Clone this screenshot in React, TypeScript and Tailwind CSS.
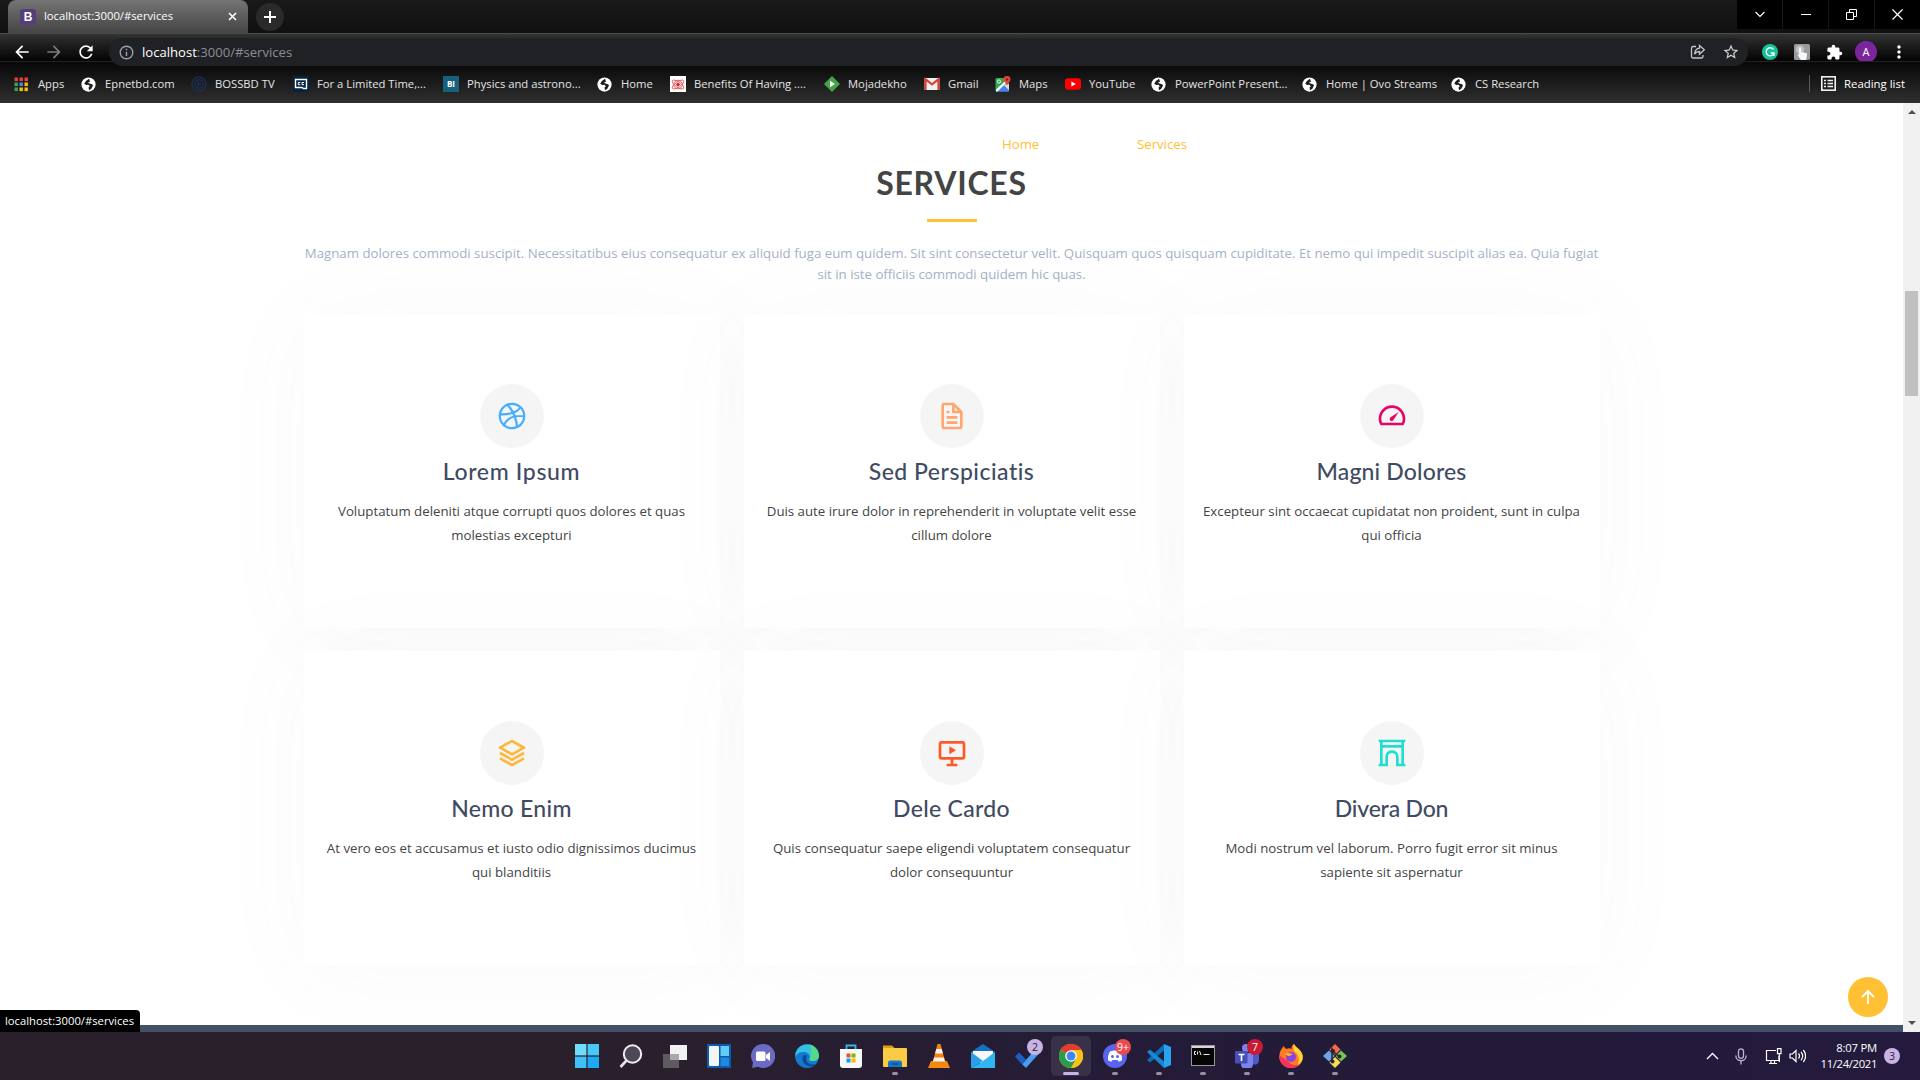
import type { ReactNode } from "react";
import {
  BiArch,
  BiFile,
  BiLayer,
  BiLogoDribbble,
  BiSlideshow,
  BiTachometer,
} from "react-icons/bi";
import { MdArrowBack, MdArrowForward, MdExtension, MdMoreVert, MdRefresh, MdStarOutline } from "react-icons/md";

const Globe = () => (
  <svg width="15" height="15" viewBox="0 0 16 16">
    <circle cx="8" cy="8" r="7.6" fill="#fff" />
    <path d="M8.6 1.8 5.2 4.2 3.4 7.2 5.6 8.6 8 8.2 9.4 9.8 8 11.2 8.6 14 11 12.4 12.8 9 11.8 7.6 9 7 7.4 5.8 9.6 5Z" fill="#1e1e1e" />
  </svg>
);

const appColors = ["#ea4335", "#ea4335", "#ea4335", "#34a853", "#4285f4", "#fbbc05", "#34a853", "#fbbc05", "#fbbc05"];
const Apps = () => (
  <svg width="15" height="15" viewBox="0 0 15 15">
    {appColors.map((c, i) => (
      <rect key={i} x={0.5 + (i % 3) * 5} y={0.5 + Math.floor(i / 3) * 5} width="3.4" height="3.6" fill={c} />
    ))}
  </svg>
);
const BossTv = () => (
  <svg width="16" height="16" viewBox="0 0 16 16" fill="none" stroke="#1b2d54">
    <circle cx="8" cy="8" r="7" strokeWidth="1.6" />
    <circle cx="8" cy="8" r="4.3" strokeWidth="1.4" />
    <path d="M6.8 5.8 10 8l-3.2 2.2Z" fill="#1b2d54" />
  </svg>
);
const Limited = () => (
  <svg width="16" height="16" viewBox="0 0 16 16">
    <rect width="16" height="16" fill="#052440" />
    <path d="M2.5 3.5h11v9h-3l-1.500-1H2.500Z" fill="none" stroke="#fff" strokeWidth="1.400" />
    <path d="M7.300 6.500h-2v2.200h2M11 6.500H9v2.200h2" fill="none" stroke="#fff" strokeWidth="1" />
  </svg>
);
const Physics = () => (
  <span className="flex h-4 w-4 items-center justify-center bg-[#17607c] text-[8px] leading-none font-bold text-white">BI</span>
);
const Benefits = () => (
  <svg width="16" height="16" viewBox="0 0 16 16">
    <rect width="16" height="16" fill="#fff" />
    <g fill="none" stroke="#e0454a" strokeWidth="0.800">
      <ellipse cx="8" cy="8.500" rx="6.800" ry="2.600" transform="rotate(35 8 8.500)" />
      <ellipse cx="8" cy="8.500" rx="6.800" ry="2.600" transform="rotate(-35 8 8.500)" />
      <circle cx="8" cy="8.500" r="4.300" />
    </g>
    <circle cx="8" cy="8.500" r="1.800" fill="#d4262c" />
  </svg>
);
const Moja = () => (
  <svg width="16" height="16" viewBox="0 0 16 16">
    <path d="M8 0l8 8-8 8-8-8Z" fill="#43a547" />
    <path d="M6 4.800 11 8l-5 3.200Z" fill="#fff" />
  </svg>
);
const Gmail = () => (
  <svg width="16" height="16" viewBox="0 0 16 16">
    <rect x="0.500" y="2" width="15" height="12" rx="1" fill="#f1f1f1" />
    <path d="M1.500 14V3.200L8 8.400l6.500-5.200V14" fill="none" stroke="#d93f35" strokeWidth="2.200" />
  </svg>
);
const Maps = () => (
  <svg width="16" height="16" viewBox="0 0 16 16">
    <rect x="0.500" y="2" width="13.500" height="13.500" rx="1" fill="#34a853" />
    <path d="M8 9l6 5.500V8Z" fill="#ddd" />
    <path d="M1 15.500 8 8.300l6 6v1.200Z" fill="#4a80f5" />
    <path d="M1 13.500 13.500 2v2.800L2.500 15.500H1Z" fill="#fff" />
    <path d="M12 0a3.500 3.500 0 0 1 3.500 3.600c0 2.300-2.500 3-3.500 6-1-3-3.500-3.700-3.500-6A3.500 3.500 0 0 1 12 0Z" fill="#e84335" />
    <circle cx="12" cy="3.500" r="1.200" fill="#8e1c15" />
    <circle cx="4" cy="5.500" r="1.600" fill="none" stroke="#fff" strokeWidth="0.900" />
  </svg>
);
const YouTube = () => (
  <svg width="16" height="16" viewBox="0 0 16 16">
    <rect y="2.300" width="16" height="11.400" rx="3" fill="#f00" />
    <path d="M6.400 5.500 10.800 8l-4.400 2.500Z" fill="#fff" />
  </svg>
);

const bookmarks: { label: string; width: string; icon: ReactNode }[] = [
  { label: "Apps", width: "w-[67px]", icon: <Apps /> },
  { label: "Epnetbd.com", width: "w-[110px]", icon: <Globe /> },
  { label: "BOSSBD TV", width: "w-[102px]", icon: <BossTv /> },
  { label: "For a Limited Time,...", width: "w-[150px]", icon: <Limited /> },
  { label: "Physics and astrono...", width: "w-[154px]", icon: <Physics /> },
  { label: "Home", width: "w-[73px]", icon: <Globe /> },
  { label: "Benefits Of Having ....", width: "w-[154px]", icon: <Benefits /> },
  { label: "Mojadekho", width: "w-[100px]", icon: <Moja /> },
  { label: "Gmail", width: "w-[71px]", icon: <Gmail /> },
  { label: "Maps", width: "w-[70px]", icon: <Maps /> },
  { label: "YouTube", width: "w-[86px]", icon: <YouTube /> },
  { label: "PowerPoint Present...", width: "w-[151px]", icon: <Globe /> },
  { label: "Home | Ovo Streams", width: "w-[149px]", icon: <Globe /> },
  { label: "CS Research", width: "w-[120px]", icon: <Globe /> },
];

function TabStrip() {
  return (
    <div className="flex h-[33px] bg-linear-to-b from-[#191919] to-[#111111]">
      <div className="ml-2 flex h-[33px] w-[240px] items-center rounded-t-lg bg-linear-to-b from-[#757575] to-[#454545] pl-3 text-[11.250px] text-white">
        <span className="flex h-4 w-4 items-center justify-center rounded-[3px] bg-[#563d7c] font-['Liberation_Sans'] text-[12px] leading-none font-bold text-white">B</span>
        <span className="ml-2 w-[184px] whitespace-nowrap">localhost:3000/#services</span>
        <svg width="9" height="9" viewBox="0 0 9 9" stroke="#fff" strokeWidth="1.600">
          <path d="M1 1l7 7M8 1 1 8" />
        </svg>
      </div>
      <div className="mt-[3px] ml-2 flex h-7 w-7 items-center justify-center rounded-full bg-[#2a2a2a]">
        <svg width="12" height="12" viewBox="0 0 12 12" stroke="#fff" strokeWidth="2">
          <path d="M6 0v12M0 6h12" />
        </svg>
      </div>
      <div className="ml-auto flex h-[29px] gap-px bg-[#181818] text-white">
        <span className="flex w-[45px] items-center justify-center bg-black">
          <svg width="10" height="7" viewBox="0 0 10 7" fill="none" stroke="#fff" strokeWidth="1.200"><path d="M0.500 1 5 5.500 9.500 1" /></svg>
        </span>
        <span className="flex w-[45px] items-center justify-center bg-black">
          <svg width="10" height="1" viewBox="0 0 10 1"><rect width="10" height="1" fill="#fff" /></svg>
        </span>
        <span className="flex w-[45px] items-center justify-center bg-black">
          <svg width="11" height="11" viewBox="0 0 11 11" fill="none" stroke="#fff"><path d="M0.500 3.500h7v7h-7zM3.500 3.500v-3h7v7H8" /></svg>
        </span>
        <span className="flex w-[45px] items-center justify-center bg-black">
          <svg width="11" height="11" viewBox="0 0 11 11" stroke="#fff" strokeWidth="1.200"><path d="M0.500 0.500l10 10M10.500 0.500l-10 10" /></svg>
        </span>
      </div>
    </div>
  );
}

function Toolbar() {
  return (
    <div className="flex h-[28px] border-t border-[#4a4a4a] bg-linear-to-b from-[#333333] to-[#050505] text-white">
      <div className="mt-[8px] ml-[12px] flex h-5 w-[97px] shrink-0 items-center gap-[12px]">
        <MdArrowBack size={20} />
        <MdArrowForward size={20} className="text-[#7b7b7b]" />
        <MdRefresh size={20} />
      </div>
      <div className="z-10 mt-1 flex h-7 w-[1639px] shrink-0 items-center rounded-full bg-[#202124] pl-[10px] text-[13.100px]">
        <svg width="15" height="15" viewBox="0 0 15 15" fill="none" stroke="#9aa0a6" strokeWidth="1.400">
          <circle cx="7.500" cy="7.500" r="6.300" />
          <path d="M7.500 6.700v4.300M7.500 3.800v1.500" />
        </svg>
        <span className="ml-2 pt-px text-white">localhost</span>
        <span className="pt-px text-[#8b8f94]">:3000/#services</span>
        <svg className="mr-[16px] ml-auto" width="16" height="16" viewBox="0 0 16 16" fill="none" stroke="#c4c6c9" strokeWidth="1.300">
          <path d="M6 2.500H3A1.500 1.500 0 0 0 1.500 4v8.500A1.500 1.500 0 0 0 3 14h8.500a1.500 1.500 0 0 0 1.500-1.500V11" />
          <path d="M9.500 1.500v2.700C6.500 4.500 5 6.500 4.500 10c1.500-2 3-2.500 5-2.500v2.700l4.800-4.400Z" />
        </svg>
        <MdStarOutline size={18} className="mr-[8px] text-[#d0d1d3]" />
      </div>
      <div className="mt-[7px] ml-[14px] flex h-[22px] items-center">
        <span className="flex h-4 w-4 items-center justify-center rounded-full bg-[#15c39a]">
          <svg width="10" height="10" viewBox="0 0 10 10" fill="none" stroke="#fff" strokeWidth="1.300"><path d="M8.500 2.500A4 4 0 1 0 9 6H5.800M9 5.500V9" /></svg>
        </span>
        <svg className="ml-4" width="16" height="16" viewBox="0 0 16 16">
          <rect width="16" height="16" rx="1.500" fill="#9b9b9b" />
          <circle cx="6" cy="5.500" r="4" fill="#c4c4c4" />
          <path d="M5 4.500c0-1.300 2-1.300 2 0V8l5 1c1 .3 1.300 1 1 2l-1 5H7l-3.500-5c0-1 1-1 1.500-.3Z" fill="#f4f8ff" />
        </svg>
        <MdExtension size={17} className="ml-4" />
        <span className="ml-[12px] flex h-[22px] w-[22px] items-center justify-center rounded-full bg-[#7b259d] text-[11px]">A</span>
        <MdMoreVert size={20} className="ml-[12px]" />
      </div>
    </div>
  );
}

function BookmarkBar() {
  return (
    <div className="flex h-[42px] items-center border-t border-[#222] bg-linear-to-b from-[#080808] to-[#303030] pl-[14px] text-[11.250px] text-[#e4e4e4]">
      {bookmarks.map((b) => (
        <div key={b.label} className={`flex shrink-0 items-center pt-[3px] ${b.width}`}>
          <span className="flex w-6 shrink-0">{b.icon}</span>
          <span className="whitespace-nowrap">{b.label}</span>
        </div>
      ))}
      <div className="mt-[2px] ml-auto flex items-center border-l border-[#5a5a5a] pr-[15px] pl-[11px]">
        <svg width="15" height="15" viewBox="0 0 15 15" fill="none" stroke="#f1f1f1">
          <rect x="0.800" y="0.800" width="13.400" height="13.400" strokeWidth="1.600" />
          <path d="M3 4.500h2M6.500 4.500H12M3 7.500h2M6.500 7.500H12M3 10.500h2M6.500 10.500H12" strokeWidth="1.500" />
        </svg>
        <span className="ml-2 whitespace-nowrap text-[11.400px] text-white">Reading list</span>
      </div>
    </div>
  );
}

const services: { title: string; track: string; lines: [string, string]; color: string; icon: ReactNode }[] = [
  { title: "Lorem Ipsum", track: "tracking-[0.650px]", lines: ["Voluptatum deleniti atque corrupti quos dolores et quas", "molestias excepturi"], color: "text-[#47aeff]", icon: <BiLogoDribbble /> },
  { title: "Sed Perspiciatis", track: "tracking-[0.500px]", lines: ["Duis aute irure dolor in reprehenderit in voluptate velit esse", "cillum dolore"], color: "text-[#ffa76e]", icon: <BiFile /> },
  { title: "Magni Dolores", track: "tracking-[0.150px]", lines: ["Excepteur sint occaecat cupidatat non proident, sunt in culpa", "qui officia"], color: "text-[#e80368]", icon: <BiTachometer /> },
  { title: "Nemo Enim", track: "tracking-[0.300px]", lines: ["At vero eos et accusamus et iusto odio dignissimos ducimus", "qui blanditiis"], color: "text-[#ffb63d]", icon: <BiLayer /> },
  { title: "Dele Cardo", track: "tracking-[0.300px]", lines: ["Quis consequatur saepe eligendi voluptatem consequatur", "dolor consequuntur"], color: "text-[#ff5828]", icon: <BiSlideshow /> },
  { title: "Divera Don", track: "tracking-[-0.200px]", lines: ["Modi nostrum vel laborum. Porro fugit error sit minus", "sapiente sit aspernatur"], color: "text-[#1edfd0]", icon: <BiArch /> },
];

function Services() {
  return (
    <main className="relative flex h-[922px] flex-1 flex-col items-center overflow-hidden bg-white">
      <nav className="flex h-[82px] w-full pt-[32px] pl-[1002px] text-[13.200px] leading-[18px] text-[#ffc033]">
        <a className="w-[135px]">Home</a>
        <a>Services</a>
      </nav>
      <h2 className="-mt-[22px] h-[40px] font-['Lato'] text-[32px] leading-[40px] font-bold tracking-[0.750px] text-[#444444]">SERVICES</h2>
      <div className="mt-[16px] h-[3px] w-[50px] bg-[#ffc233]" />
      <p className="mt-[21px] text-center text-[13.250px] leading-[21px] whitespace-nowrap text-[#a6b1c8]">
        Magnam dolores commodi suscipit. Necessitatibus eius consequatur ex aliquid fuga eum quidem. Sit sint consectetur velit. Quisquam quos quisquam cupiditate. Et nemo qui impedit suscipit alias ea. Quia fugiat
        <br />
        sit in iste officiis commodi quidem hic quas.
      </p>
      <div className="mt-[29px] grid w-[1296px] grid-cols-3 gap-x-6 gap-y-[23px]">
        {services.map((s) => (
          <article key={s.title} className="flex h-[314px] flex-col items-center bg-white pt-[70px] text-center shadow-[0_5px_90px_0_rgba(110,110,125,0.045)]">
            <span className={`flex h-16 w-16 items-center justify-center rounded-full bg-[#f5f5f5] text-[32px] ${s.color}`}>{s.icon}</span>
            <h4 className={`mt-[9px] h-[42px] font-['Lato'] text-[23px] leading-[28px] font-medium text-[#3f4b63] ${s.track}`}>{s.title}</h4>
            <p className="text-[13.250px] leading-[24px] whitespace-nowrap text-[#444444]">
              {s.lines[0]}
              <br />
              {s.lines[1]}
            </p>
          </article>
        ))}
      </div>
      <a className="absolute right-[15px] bottom-[8px] flex h-10 w-10 items-center justify-center rounded-full bg-[#ffc033]">
        <svg width="14" height="16" viewBox="0 0 14 16" fill="none" stroke="#fff" strokeWidth="1.800"><path d="M7 15V2M1 8l6-6 6 6" /></svg>
      </a>
    </main>
  );
}

function ScrollBar() {
  return (
    <div className="flex h-[929px] w-[17px] flex-col items-center bg-[#f1f1f1]">
      <svg className="mt-[7px]" width="8" height="4" viewBox="0 0 8 4"><path d="M4 0l4 4H0Z" fill="#505050" /></svg>
      <div className="mt-[177px] h-[105px] w-[13px] bg-[#c1c1c1]" />
      <svg className="mt-auto mb-[7px]" width="8" height="4" viewBox="0 0 8 4"><path d="M4 4 0 0h8Z" fill="#505050" /></svg>
    </div>
  );
}

const Badge = ({ text, tone }: { text: string; tone: string }) => (
  <span className={`absolute -top-[5px] -right-[4px] flex h-4 min-w-4 items-center justify-center rounded-full text-[10.500px] leading-none ${tone}`}>{text}</span>
);

const taskIcons: { id: string; running?: boolean; active?: boolean; badge?: ReactNode; art: ReactNode }[] = [
  { id: "start", art: <><path d="M0 0h11.400v11.400H0z" fill="#6fdcfb" /><path d="M12.600 0H24v11.400H12.600z" fill="#4ac8fa" /><path d="M0 12.600h11.400V24H0z" fill="#3fc0f8" /><path d="M12.600 12.600H24V24H12.600z" fill="#1fa9f5" /></> },
  { id: "search", art: <><circle cx="13.500" cy="10" r="8.700" fill="#4d4858" stroke="#f0f0f0" strokeWidth="2" /><path d="M7.500 16.500 1.500 23" stroke="#e5e5e5" strokeWidth="2.600" /></> },
  { id: "tasks", art: <><rect x="0" y="10" width="16" height="14" fill="#5d5a62" /><rect x="7" y="1" width="17" height="15" fill="#f2f2f2" /><rect x="7" y="10" width="9" height="6" fill="#aaa8ad" /></> },
  { id: "widgets", art: <><rect width="24" height="24" rx="1" fill="#0c5cab" /><rect x="2" y="2" width="10" height="20" rx="1" fill="#f4f4f4" /><rect x="13.500" y="2" width="8.500" height="10" fill="#62cbf7" /><rect x="13.500" y="13.500" width="8.500" height="8.500" fill="#1f8ae0" /></> },
  { id: "chat", art: <><path d="M12 0a12 12 0 1 1-5 22.800L1 24l1-5.500A12 12 0 0 1 12 0Z" fill="#6b6ac4" /><rect x="5" y="7.500" width="9.500" height="9.500" rx="1.500" fill="#fff" /><path d="m15 11 4-3v9l-4-3Z" fill="#fff" /></> },
  { id: "edge", art: <><circle cx="12" cy="12" r="12" fill="#1579cf" /><path d="M.6 9A12 12 0 0 1 24 11c.3 3.500-2.500 6-6 6-3 0-4-1-3.500-2.500C16 12 13 8 9 8S2 9 .6 13Z" fill="#35bfe0" /><path d="M14 .2A12 12 0 0 1 24 11c.3 3.500-2.500 6-6 6-3 0-4-1-3.500-2.500 2-1 3-10-.5-14.300Z" fill="#57d889" /><path d="M8 12c-2 5 2 11 9 10.500 2-.3 4-1.500 5-3-4 2-9 1-10.500-2.500C10.500 14 12 12 12 12c-1-1.500-3-1.500-4 0Z" fill="#0b4a94" /></> },
  { id: "store", art: <><path d="M7.500 6V1.500h9V6" fill="none" stroke="#35b5ef" strokeWidth="1.800" /><path d="M1 5h22v16a3 3 0 0 1-3 3H4a3 3 0 0 1-3-3Z" fill="#f8f8f8" /><path d="M7.500 9.500h4v4h-4z" fill="#f25022" /><path d="M12.500 9.500h4v4h-4z" fill="#7fba00" /><path d="M7.500 14.500h4v4h-4z" fill="#00a4ef" /><path d="M12.500 14.500h4v4h-4z" fill="#ffb900" /></> },
  { id: "files", running: true, art: <><path d="M0 1.500h9l3 3H0z" fill="#e0a010" /><rect y="4" width="24" height="19" rx="1" fill="#fccb46" /><path d="M5 23v-4a2.500 2.500 0 0 1 2.500-2.500h9A2.500 2.500 0 0 1 19 19v4Z" fill="#1877c9" /><path d="M8.500 20h7" stroke="#0b4f94" strokeWidth="1.600" /></> },
  { id: "vlc", art: <><path d="M4 17h16l3 7H1Z" fill="#f58a0c" /><path d="M10.500 0h3l5 19c-2 1.800-11 1.800-13 0Z" fill="#f5820b" /><path d="m9.300 5-1.200 4.500h7.800L14.700 5ZM7.100 13.500 6 17.500h12l-1.100-4Z" fill="#f4f4f4" /></> },
  { id: "mail", art: <><path d="M0 8 12 0l12 8v16H0Z" fill="#1272c4" /><path d="M2 7h20v8L12 20 2 15Z" fill="#f7f7f7" /><path d="M0 8l12 9-12 7Z" fill="#2c9fe8" /><path d="M24 8 8 20l-8 4h24Z" fill="#33b4f2" /></> },
  { id: "todo", badge: <Badge text="2" tone="bg-[#c9b3e4] text-[#222]" />, art: <><path d="M0 12.500 4 8.500l7 7-4 5Z" fill="#1d5fc0" /><path d="m7 20.500 13-15 4 4L11 24 7 20Z" fill="#4a9df0" /></> },
  { id: "chrome", active: true, art: <><circle cx="12" cy="12" r="12" fill="#fbc116" /><path d="M12 12 1.600 6A12 12 0 0 1 22.400 6Z" fill="#e33b2e" /><path d="M1.600 6A12 12 0 0 0 12 24l5.200-9L12 12Z" fill="#2a9d4b" /><path d="M12 6h10.400a12 12 0 0 1-10.400 18l5.200-9Z" fill="#fbc116" /><circle cx="12" cy="12" r="5.800" fill="#fff" /><circle cx="12" cy="12" r="4.500" fill="#4285f4" /></> },
  { id: "discord", running: true, badge: <Badge text="9+" tone="bg-[#e84a4e] text-white" />, art: <><circle cx="12" cy="12" r="12" fill="#5865f2" /><path d="M7 7.500c3-1.500 7-1.500 10 0 1.500 2.500 2.300 5.500 2 8.500-1 1-2.500 1.500-3.500 1.500l-1-1.500h-5l-1 1.500c-1 0-2.500-.5-3.500-1.500-.3-3 .5-6 2-8.500Z" fill="#fff" /><circle cx="9.500" cy="12.500" r="1.500" fill="#5865f2" /><circle cx="14.500" cy="12.500" r="1.500" fill="#5865f2" /></> },
  { id: "code", running: true, art: <><path d="m17 0 7 3v18l-7 3Z" fill="#27a4ee" /><path d="M17 0v6.500L3 18.500 0 16Z" fill="#0a6db5" /><path d="M17 24v-6.500L3 5.500 0 8Z" fill="#1489d4" /></> },
  { id: "terminal", running: true, art: <><rect x="0.500" y="1.500" width="23" height="20" fill="#050505" stroke="#999" /><path d="M1 2h22v2H1z" fill="#d8d8d8" /><path d="M5 7.500H3.500v3H5M6.500 7.500v3M8.500 7l1.500 4M12.500 10.500h6" fill="none" stroke="#eee" /></> },
  { id: "teams", running: true, badge: <Badge text="7" tone="bg-[#c91b35] text-white" />, art: <><circle cx="11" cy="4" r="4" fill="#7b83eb" /><circle cx="20" cy="6" r="3" fill="#5059c9" /><path d="M6 9h12v9a6 6 0 0 1-12 3Z" fill="#7b83eb" /><path d="M18 9.500h6V17a4 4 0 0 1-6 3Z" fill="#5059c9" /><rect x="0" y="7" width="12.500" height="12.500" rx="1" fill="#464eb8" /><path d="M3.500 10.500h6M6.500 10.500V17" stroke="#fff" strokeWidth="1.600" /></> },
  { id: "firefox", running: true, art: <><path d="M2 6c1-2 2-3 2.500-4L7 5c3-1 4-1 6 0C12 3 13 1 15 0c1 3 7 5 8.500 11C25 18 19 24 12 24S-1 17 .5 11C.8 9 1 7.500 2 6Z" fill="#ff7a20" /><path d="M15 0c1 3 7 5 8.500 11 1 5-2 9-5.500 11 3-5 2-11-2-14-2-2-2-6-1-8Z" fill="#ffd23e" /><path d="M.5 11C-.5 18 5 24 12 24c4 0 8-2 10-5-5 4-11 2-13-2-2-2-6-3-8.500-6Z" fill="#f5335c" /><circle cx="12" cy="13" r="5" fill="#8b45df" /><path d="M6 10c3-2 6-1 8 1-2-.5-3 1-5 1Z" fill="#ffb32c" /></> },
  { id: "git", running: true, art: <><path d="m12 0 5.500 5.500L12 11 6.500 5.500Z" fill="#f26b4e" /><path d="m18 6.500 6 5.500-6 5.500-5.500-5.500Z" fill="#79c257" /><path d="m12 13 5.500 5.500L12 24l-5.500-5.500Z" fill="#f7dc5b" /><path d="m6 6.500 5.500 5.500L6 17.500 0 12Z" fill="#6da5e8" /><path d="M9 3.500v14M9.500 7l7 6" stroke="#2a2626" strokeWidth="1.500" fill="none" /><circle cx="9.500" cy="17.500" r="2" fill="#2a2626" /><circle cx="10" cy="7" r="2" fill="#2a2626" /><circle cx="16.500" cy="12.500" r="2" fill="#2a2626" /></> },
];

function Taskbar() {
  return (
    <footer className="flex h-[48px] items-center bg-linear-to-r from-[#2a202c] from-30% via-[#241b38] via-60% to-[#231a3d] text-white">
      <div className="ml-[567px] flex gap-1">
        {taskIcons.map((t) => (
          <div key={t.id} className={`flex h-10 w-10 flex-col items-center rounded-[5px] pt-2 ${t.active ? "bg-[#393147]" : ""}`}>
            <div className="relative h-6 w-6">
              <svg width="24" height="24" viewBox="0 0 24 24">{t.art}</svg>
              {t.badge}
            </div>
            {t.running && <span className="mt-1 h-[3px] w-[6px] rounded-full bg-[#98929f]" />}
            {t.active && <span className="mt-1 h-[3px] w-4 rounded-full bg-[#c9b3e4]" />}
          </div>
        ))}
      </div>
      <div className="ml-auto flex items-center">
        <svg width="13" height="8" viewBox="0 0 13 8" fill="none" stroke="#fff" strokeWidth="1.300"><path d="M1 7l5.500-5.500L12 7" /></svg>
        <svg className="ml-[16px]" width="12" height="17" viewBox="0 0 12 17" fill="none" stroke="#c2b0d8" strokeWidth="1.300"><rect x="3.500" y="0.800" width="5" height="9.500" rx="2.500" /><path d="M0.800 7.500C1 14.500 11 14.500 11.200 7.500M6 13v3.500" /></svg>
        <svg className="ml-[18px]" width="17" height="17" viewBox="0 0 17 17" fill="none" stroke="#fff" strokeWidth="1.200"><path d="M11 2.500H1.500v10H14V8M4 15.500h8M6 12.500v3M9.500 12.500v3" /><path d="M12.500 0.600h3.500v5h-3.500zM14.300 5.500V14" /></svg>
        <svg className="ml-[7px]" width="17" height="14" viewBox="0 0 17 14" fill="none" stroke="#fff" strokeWidth="1.200"><path d="M1 5h2.500L7 1.500v11L3.500 9H1ZM9.500 4.500c1.300 1.500 1.300 3.500 0 5M12 2.800c2 2.500 2 6 0 8.500M14.300 1c3 3.500 3 8.500 0 12" /></svg>
        <div className="ml-[11px] flex w-[60px] flex-col items-end text-[11.300px] leading-4 tracking-[-0.200px]">
          <span>8:07 PM</span>
          <span className="tracking-[-0.350px]">11/24/2021</span>
        </div>
        <span className="mr-5 ml-[7px] flex h-4 w-4 items-center justify-center rounded-full bg-[#c9b3e4] text-[10px] text-[#222]">3</span>
      </div>
    </footer>
  );
}

export default function App() {
  return (
    <div className="relative flex h-[1080px] w-[1920px] flex-col overflow-hidden bg-white font-['Open_Sans',sans-serif]">
      <TabStrip />
      <Toolbar />
      <BookmarkBar />
      <div className="flex h-[929px]">
        <div className="flex flex-1 flex-col">
          <Services />
          <div className="h-[7px] bg-[#445066]" />
        </div>
        <ScrollBar />
      </div>
      <Taskbar />
      <div className="absolute bottom-[48px] left-0 flex h-[22px] w-[140px] items-center rounded-tr-[4px] bg-black pt-px pl-[5px] text-[11.250px] whitespace-nowrap text-white">
        localhost:3000/#services
      </div>
    </div>
  );
}
